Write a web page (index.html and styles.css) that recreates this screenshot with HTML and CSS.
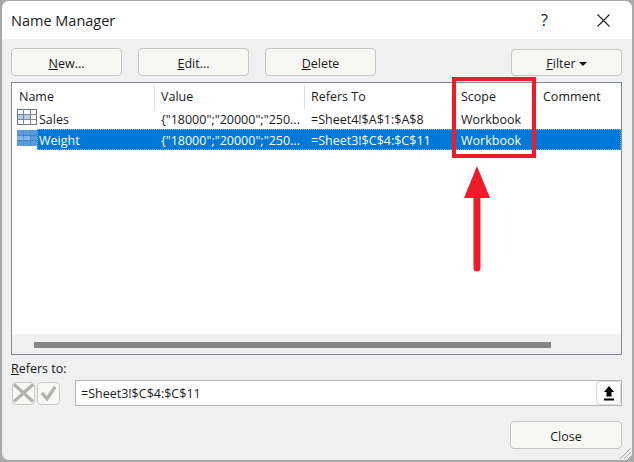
FILE: index.html
```html
<!DOCTYPE html>
<html lang="en">
<head>
<meta charset="utf-8">
<title>Name Manager</title>
<link rel="stylesheet" href="styles.css">
</head>
<body>
<div class="dialog">
  <header class="titlebar">
    <span class="title">Name Manager</span>
    <span class="help">?</span>
    <svg class="close-x" width="13" height="13" viewBox="0 0 13 13"><path d="M0.5 0.5L12.5 12.5M12.5 0.5L0.5 12.5" stroke="#222" stroke-width="1.1" fill="none"/></svg>
  </header>
  <main class="content">
    <div class="toolbar">
      <button class="btn"><u>N</u>ew...</button>
      <button class="btn"><u>E</u>dit...</button>
      <button class="btn"><u>D</u>elete</button>
      <button class="btn btn-filter"><span><u>F</u>ilter</span><i class="caret"></i></button>
    </div>
    <section class="list">
      <div class="list-head">
        <div class="hcell">Name</div>
        <div class="hcell">Value</div>
        <div class="hcell">Refers To</div>
        <div class="hcell hcell-plain">Scope</div>
        <div class="hcell">Comment</div>
      </div>
      <div class="list-rows">
        <div class="row">
          <svg class="table-icon" width="20" height="16" viewBox="0 0 20 16">
            <rect x="0.5" y="0.5" width="19" height="15" fill="#fff" stroke="#6f7782"/>
            <rect x="1" y="5.5" width="12" height="5" fill="#b4cde6"/>
            <path d="M6.5 1V15M13.5 1V15M1 5.5H19M1 10.5H19" stroke="#7d8790" fill="none"/>
          </svg>
          <div class="row-body">
            <span class="cell">Sales</span>
            <span class="cell">{"18000";"20000";"250...</span>
            <span class="cell">=Sheet4!$A$1:$A$8</span>
            <span class="cell">Workbook</span>
            <span class="cell"></span>
          </div>
        </div>
        <div class="row row-selected">
          <svg class="table-icon" width="20" height="16" viewBox="0 0 20 16">
            <rect x="0" y="0" width="20" height="16" fill="#5a9bd9"/>
            <rect x="0" y="5" width="13" height="5" fill="#82b6e8"/>
            <path d="M6.5 0V16M13.5 0V16" stroke="#3f7fc0" stroke-dasharray="1 1" fill="none"/>
            <path d="M0 5.5H20M0 10.5H20" stroke="#3f86cf" fill="none"/>
          </svg>
          <div class="row-body">
            <span class="cell">Weight</span>
            <span class="cell">{"18000";"20000";"250...</span>
            <span class="cell">=Sheet3!$C$4:$C$11</span>
            <span class="cell">Workbook</span>
            <span class="cell"></span>
          </div>
        </div>
      </div>
      <div class="hscroll"><div class="hthumb"></div></div>
    </section>
    <label class="refers-label"><u>R</u>efers to:</label>
    <div class="refers-row">
      <span class="tool">
        <svg width="22" height="22" viewBox="0 0 22 22"><path d="M1 2L21 20M21 2L1 20" stroke="#b2b2b2" stroke-width="3.5" fill="none"/></svg>
      </span>
      <span class="tool tool-check">
        <svg width="22" height="22" viewBox="0 0 22 22"><path d="M4 11L9.5 17L18 4.5" stroke="#b2b2b2" stroke-width="3.5" fill="none"/></svg>
      </span>
      <div class="refers-input">
        <span class="refers-text">=Sheet3!$C$4:$C$11</span>
        <span class="collapse">
          <svg width="10" height="15" viewBox="0 0 10 15"><path d="M5 0L10 6H7.5V10.5H2.5V6H0Z" fill="#000"/><rect x="0" y="12.5" width="10" height="2" fill="#000"/></svg>
        </span>
      </div>
    </div>
    <div class="footer"><button class="btn btn-close">Close</button></div>
  </main>
  <svg class="grip" width="14" height="14" viewBox="0 0 14 14"><path d="M13 2L2 13M13 6L6 13M13 10L10 13" stroke="#a8a8a8" fill="none"/></svg>
</div>
<div class="mark-box"></div>
<svg class="mark-arrow" width="26" height="106" viewBox="0 0 26 106">
  <path d="M13 0L26 32H0Z" fill="#ee1c2a"/>
  <path d="M13 30V102" stroke="#ee1c2a" stroke-width="7" stroke-linecap="round" fill="none"/>
</svg>
</body>
</html>
```

FILE: styles.css
```css
* { box-sizing: border-box; }
html, body { margin: 0; height: 100%; }
body {
  background: #a9a9a9;
  font-family: "Open Sans", "Noto Sans", sans-serif;
  font-size: 12.5px;
  color: #1a1a1a;
  padding: 1px 2px;
  overflow: hidden;
}
.dialog {
  position: relative;
  height: 459px;
  background: #f0f0f0;
  border-radius: 7px;
  display: flex;
  flex-direction: column;
  overflow: hidden;
}
.titlebar {
  height: 38px;
  flex: none;
  background: #fff;
  display: flex;
  align-items: center;
  padding: 0 22px 0 9px;
}
.title { font-size: 14.5px; flex: 1; }
.help { font-size: 16px; margin-right: 49px; }
.close-x { display: block; }
.content {
  flex: 1;
  padding: 9px 10px 0 9px;
  display: flex;
  flex-direction: column;
}
.toolbar { display: flex; gap: 16px; height: 28px; }
.btn {
  width: 111px;
  height: 28px;
  background: #f7f7f4;
  border: 1px solid #c6c6c6;
  border-radius: 4px;
  font: inherit;
  color: inherit;
  padding: 2px 0 0;
}
.btn-filter {
  margin-left: auto;
  margin-top: 1px;
  height: 27px;
  display: flex;
  align-items: center;
  justify-content: center;
  gap: 3px;
}
.btn-close { width: 112px; }
.caret {
  width: 0;
  height: 0;
  border-left: 4px solid transparent;
  border-right: 4px solid transparent;
  border-top: 4px solid #111;
}
.list {
  margin-top: 6px;
  height: 273px;
  flex: none;
  background: #fff;
  border: 1px solid #7f8a96;
  display: flex;
  flex-direction: column;
}
.list-head {
  display: grid;
  grid-template-columns: 143px 150px 150px 82px 1fr;
  height: 26px;
  flex: none;
  padding-top: 2px;
}
.hcell {
  padding-left: 6px;
  border-right: 1px solid #e0e0e0;
  height: 24px;
  line-height: 24px;
}
.hcell:first-child { padding-left: 7px; }
.hcell:last-child, .hcell-plain { border-right: 0; }
.list-rows { flex: 1; }
.row { display: flex; height: 20px; align-items: flex-start; padding-left: 5px; }
.row-selected { height: 21px; }
.table-icon { flex: none; display: block; }
.row-body {
  flex: 1;
  display: grid;
  grid-template-columns: 118px 150px 150px 82px 1fr;
  align-items: center;
  height: 100%;
  white-space: nowrap;
}
.cell { padding-left: 6px; overflow: hidden; }
.cell:first-child { padding-left: 2px; }
.row-selected .table-icon { margin-top: 1px; }
.row-selected .row-body {
  background: #0078d7;
  color: #fff;
  padding-top: 1px;
  outline: 1px dotted #7fb4e4;
  outline-offset: -1px;
}
.hscroll {
  height: 20px;
  flex: none;
  background: #f0f0f0;
  display: flex;
  align-items: center;
  padding-left: 22px;
  padding-top: 1px;
}
.hthumb { width: 517px; height: 6px; background: #858585; }
.refers-label { margin-top: 5px; height: 20px; line-height: 18px; }
.refers-row { display: flex; align-items: center; height: 26px; }
.tool {
  width: 23px;
  height: 23px;
  border: 1px solid #c9c9c9;
  border-radius: 4px;
  margin-left: 1px;
  background: #f7f7f4;
  display: flex;
  align-items: center;
  justify-content: center;
  flex: none;
}
.tool-check { margin-left: 2px; margin-right: 15px; }
.refers-input {
  flex: 1;
  height: 26px;
  background: #fff;
  border: 1px solid #b4b4b4;
  display: flex;
  align-items: center;
  justify-content: space-between;
  padding-left: 5px;
}
.collapse {
  width: 25px;
  height: 24px;
  border: 1px solid #d8d8d8;
  border-radius: 4px;
  background: #fdfdfd;
  display: flex;
  align-items: center;
  justify-content: center;
}
.footer { display: flex; justify-content: flex-end; margin-top: 15px; }
.grip { position: absolute; right: 0; bottom: 0; }
.mark-box {
  position: absolute;
  left: 452px;
  top: 77px;
  width: 84px;
  height: 81px;
  border: 4px solid #ee1c2a;
}
.mark-arrow { position: absolute; left: 464px; top: 166px; }
```
